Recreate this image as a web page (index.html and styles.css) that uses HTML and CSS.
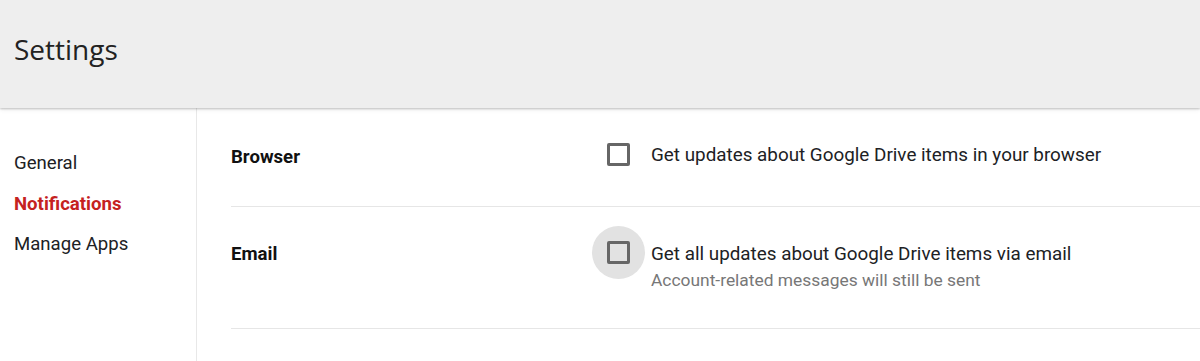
FILE: index.html
```html
<!DOCTYPE html>
<html>
<head>
<meta charset="utf-8">
<link rel="stylesheet" href="styles.css">
</head>
<body>
<header class="topbar"><h1 class="title">Settings</h1></header>
<div class="main">
  <nav class="sidebar">
    <a class="nav-item">General</a>
    <a class="nav-item active">Notifications</a>
    <a class="nav-item">Manage Apps</a>
  </nav>
  <section class="content">
    <div class="row row-browser">
      <div class="label">Browser</div>
      <div class="option">
        <span class="check-wrap"><span class="checkbox"></span></span>
        <div class="option-text">
          <div class="primary">Get updates about Google Drive items in your browser</div>
        </div>
      </div>
    </div>
    <div class="row row-email">
      <div class="label">Email</div>
      <div class="option">
        <span class="check-wrap hover"><span class="checkbox"></span></span>
        <div class="option-text">
          <div class="primary">Get all updates about Google Drive items via email</div>
          <div class="secondary">Account-related messages will still be sent</div>
        </div>
      </div>
    </div>
  </section>
</div>
</body>
</html>
```
FILE: styles.css
```css
* { box-sizing: border-box; }
html, body { margin: 0; padding: 0; background: #fff; }
body {
  font-family: Roboto, "Liberation Sans", Arial, sans-serif;
  color: #202124;
  width: 1200px;
  height: 361px;
  overflow: hidden;
}
.topbar {
  height: 108px;
  background: #eeeeee;
  box-shadow: 0 1px 2px rgba(0,0,0,0.22), 0 2px 5px rgba(0,0,0,0.06);
  position: relative;
  z-index: 1;
  display: flex;
  align-items: center;
  padding-left: 14px;
}
.title {
  margin: 0 0 10px 0;
  font-family: "Open Sans", Roboto, sans-serif;
  font-weight: 400;
  font-size: 28px;
  color: #222;
}
.main {
  display: flex;
  height: 253px;
}
.sidebar {
  width: 197px;
  border-right: 1px solid #e8e8e8;
  padding-top: 35px;
  display: flex;
  flex-direction: column;
}
.nav-item {
  display: block;
  padding-left: 14px;
  font-size: 18.6px;
  line-height: 40.5px;
  color: #202124;
}
.nav-item.active {
  font-weight: 700;
  color: #c5221f;
}
.content {
  flex: 1;
  padding-left: 34px;
}
.row {
  display: flex;
  align-items: flex-start;
  border-bottom: 1px solid #e6e6e6;
}
.row-browser { height: 99px; padding-top: 33px; }
.row-email { height: 122px; padding-top: 18px; }
.label {
  width: 394px;
  flex: none;
  font-weight: 700;
  font-size: 18.6px;
  line-height: 32px;
  color: #111;
}
.row-email .label { margin-top: 13px; }
.option {
  display: flex;
  align-items: flex-start;
}
.row-browser .option { margin-top: -13px; }
.row-email .option { margin-top: 1px; }
.check-wrap {
  width: 53px;
  height: 53px;
  border-radius: 50%;
  display: flex;
  align-items: center;
  justify-content: center;
  margin-left: -33px;
  margin-right: 6px;
  flex: none;
}
.check-wrap.hover { background: #e2e2e2; }
.checkbox {
  width: 23px;
  height: 23px;
  border: 3px solid #666;
  border-radius: 2px;
  background: transparent;
}
.option-text { padding-top: 15px; }
.row-email .option-text { padding-top: 16px; }
.primary {
  font-size: 18.85px;
  line-height: 24px;
  color: #202124;
}
.secondary {
  margin-top: 2px;
  font-size: 17.4px;
  line-height: 24px;
  color: #777;
}
```
